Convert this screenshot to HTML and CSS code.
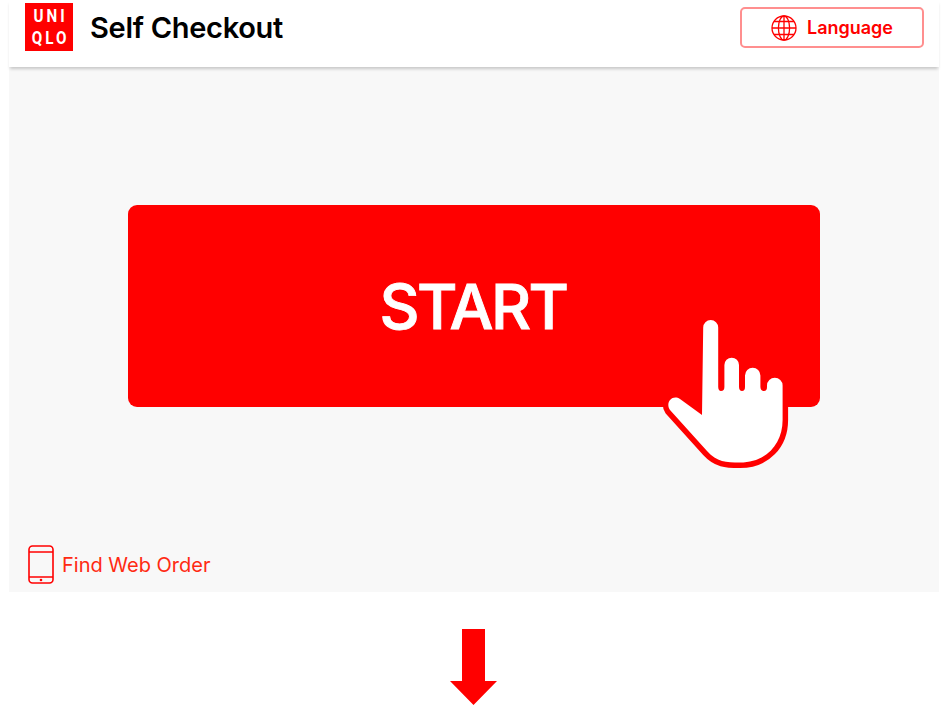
FILE: index.html
```html
<!DOCTYPE html>
<html lang="en">
<head>
    <meta charset="UTF-8">
    <meta name="viewport" content="width=device-width, initial-scale=1.0">
    <title>Self Checkout</title>
    <link rel="stylesheet" href="styles.css">
</head>
<body>
    <div class="screen">
        <header class="top-bar">
            <div class="brand">
                <div class="logo">
                    <span class="logo-text">UNI<br>QLO</span>
                </div>
                <h1>Self Checkout</h1>
            </div>
            <button class="lang-btn">
                <svg class="globe" viewBox="0 0 26 26" fill="none" stroke="#f00" stroke-width="1.3">
                    <circle cx="13" cy="13" r="12"/>
                    <ellipse cx="13" cy="13" rx="5.6" ry="12"/>
                    <path d="M13 1v24M1 13h24M3 6.5h20M3 19.5h20"/>
                </svg>
                Language
            </button>
        </header>

        <main class="panel">
            <div class="start-btn">
                START
                <svg class="hand" viewBox="0 0 180 170">
                    <path d="M52 105 L53.2 17.5 A7.5 7.5 0 0 1 68.2 17.5 L68.2 77 Q68.4 81 71 81 Q74.4 81 74.4 77 L74.4 55 A7.3 7.3 0 0 1 89 55 L89 77 Q89.2 81 92 81 Q95 81 95 77 L95 65.5 A7.7 7.7 0 0 1 110.4 65.5 L110.4 77 Q110.6 81 114 81 Q117 81 117 77 L117 75.5 A7.8 7.8 0 0 1 132.6 75.5 L132.6 110 C132.6 134 116 152.6 90 152.6 C76 152.6 67 152 57 141 L20 100 C15 93 22 84 30 89 Z" fill="#fff" stroke="#f00" stroke-width="11" stroke-linejoin="round" paint-order="stroke"/>
                </svg>
            </div>
            <a class="web-order" href="#">
                <svg class="phone" viewBox="0 0 26 39" fill="none" stroke="#f00" stroke-width="1.6">
                    <rect x="1" y="1" width="24" height="37" rx="3.5"/>
                    <path d="M1 7h24M1 32h24"/>
                    <circle cx="13" cy="35" r="1.3" fill="#f00" stroke="none"/>
                </svg>
                Find Web Order
            </a>
        </main>

        <div class="arrow-row">
            <svg class="arrow" viewBox="0 0 47 76">
                <path d="M12 0h23v52h12L23.5 76 0 52h12z" fill="#f00"/>
            </svg>
        </div>
    </div>
</body>
</html>
```

FILE: styles.css
```css
html, body {
    margin: 0;
    padding: 0;
    background: #fff;
}
body {
    font-family: Inter, 'Liberation Sans', sans-serif;
    height: 708px;
    overflow: hidden;
}
.screen {
    width: 930px;
    margin-left: 9px;
}
.top-bar {
    height: 67px;
    display: flex;
    justify-content: space-between;
    align-items: flex-start;
    background: #fff;
    box-shadow: 0 3px 3px -1px rgba(0,0,0,0.2);
    position: relative;
}
.brand {
    display: flex;
    align-items: center;
    gap: 17px;
    margin: 3px 0 0 16px;
}
.logo {
    width: 48px;
    height: 48px;
    background: #f00;
    color: #fff;
    display: flex;
    align-items: center;
    justify-content: center;
}
.logo-text {
    font-family: Roboto, sans-serif;
    font-weight: 700;
    font-size: 19px;
    line-height: 22.5px;
    letter-spacing: 3.8px;
    margin-right: -4px;
    text-align: center;
    white-space: nowrap;
    transform: scaleX(0.8);
}
h1 {
    margin: 0;
    font-size: 29px;
    font-weight: 600;
    letter-spacing: -0.3px;
    color: #000;
}
.lang-btn {
    width: 184px;
    height: 41px;
    margin: 7px 15px 0 0;
    display: flex;
    align-items: center;
    justify-content: center;
    gap: 10px;
    background: #fff;
    border: 2px solid #ff8f8f;
    border-radius: 5px;
    color: #f00;
    font-family: inherit;
    font-size: 18px;
    font-weight: 600;
}
.globe {
    width: 26px;
    height: 26px;
}
.panel {
    height: 525px;
    background: #f8f8f8;
    display: flex;
    flex-direction: column;
    align-items: center;
}
.start-btn {
    width: 692px;
    height: 202px;
    margin-top: 138px;
    display: flex;
    align-items: center;
    justify-content: center;
    position: relative;
    box-sizing: border-box;
    padding-right: 2px;
    background: #f00;
    border-radius: 9px;
    color: #fff;
    font-size: 62px;
    font-weight: 500;
    letter-spacing: -2.6px;
    -webkit-text-stroke: 0.9px #fff;
}
.hand {
    position: absolute;
    left: 522px;
    top: 105px;
    width: 180px;
    height: 170px;
}
.web-order {
    align-self: flex-start;
    margin: 138px 0 0 19px;
    display: flex;
    align-items: center;
    gap: 8px;
    color: #ff2a12;
    font-size: 20px;
    text-decoration: none;
}
.phone {
    width: 26px;
    height: 39px;
}
.arrow-row {
    display: flex;
    justify-content: center;
    padding: 37px 2px 0 0;
}
.arrow {
    width: 47px;
    height: 76px;
}
```
